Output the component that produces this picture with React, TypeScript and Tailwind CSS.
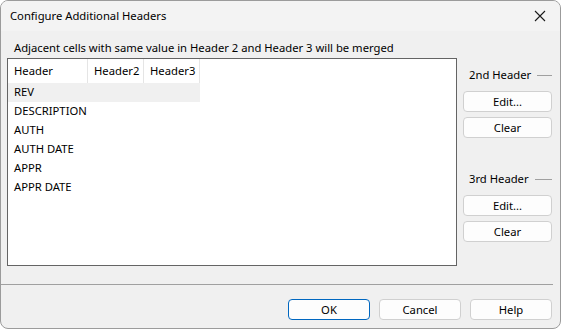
import React from "react";

const font = { fontFamily: '"Noto Sans", "Open Sans", sans-serif' };

function Btn({ label, primary }: { label: string; primary?: boolean }) {
  return (
    <button
      className={
        "h-[21px] rounded-[4px] bg-[#fdfdfd] text-[11.25px] leading-none text-black " +
        (primary ? "border border-[#0067c0]" : "border border-[#d0d0d0]")
      }
    >
      {label}
    </button>
  );
}

function GroupLabel({ text }: { text: string }) {
  return (
    <div className="flex h-[16px] items-center pl-[6px] text-[11.25px] leading-[16px] text-black">
      <span>{text}</span>
      <div className="ml-[6px] h-px flex-1 bg-[#a0a0a0]" />
    </div>
  );
}

const rows = ["REV", "DESCRIPTION", "AUTH", "AUTH DATE", "APPR", "APPR DATE"];

export default function App() {
  return (
    <div
      className="flex h-[329px] w-[561px] flex-col overflow-hidden rounded-[8px] border border-[#9b9b9b] bg-[#f0f0f0]"
      style={font}
    >
      {/* title bar */}
      <div className="flex h-[30px] items-center justify-between bg-[#f3f3f3] pl-[9px] pr-[10px]">
        <span className="text-[11.25px] text-black">Configure Additional Headers</span>
        <svg width="12" height="12" viewBox="0 0 12 12" className="mr-[4px]">
          <path d="M1 1L11 11M11 1L1 11" stroke="#1a1a1a" strokeWidth="1.1" fill="none" />
        </svg>
      </div>

      <div className="flex flex-1 flex-col pl-[6px] pr-[8px]">
        <div className="h-[27px] pl-[7px] pt-[9px] text-[11.25px] leading-[16px] text-black">
          Adjacent cells with same value in Header 2 and Header 3 will be merged
        </div>

        <div className="flex gap-[6px]">
          {/* list */}
          <div className="h-[208px] w-[450px] border border-[#646464] bg-white">
            <div className="flex h-[24px] w-[192px] text-[11.25px] text-black">
              <div className="flex w-[80px] items-center border-r border-[#e5e5e5] pl-[6px]">Header</div>
              <div className="flex w-[56px] items-center border-r border-[#e5e5e5] pl-[6px]">Header2</div>
              <div className="flex w-[56px] items-center border-r border-[#e5e5e5] pl-[6px]">Header3</div>
            </div>
            {rows.map((r, i) => (
              <div
                key={r}
                className={
                  "flex h-[19px] w-[192px] items-center pl-[6px] text-[11.25px] text-black " +
                  (i === 0 ? "bg-[#f0f0f0]" : "")
                }
              >
                {r}
              </div>
            ))}
          </div>

          {/* side buttons */}
          <div className="flex w-[89px] flex-col">
            <div className="mt-[9px]">
              <GroupLabel text="2nd Header" />
            </div>
            <div className="mt-[8px] flex flex-col gap-[5px]">
              <Btn label="Edit..." />
              <Btn label="Clear" />
            </div>
            <div className="mt-[33px]">
              <GroupLabel text="3rd Header" />
            </div>
            <div className="mt-[8px] flex flex-col gap-[5px]">
              <Btn label="Edit..." />
              <Btn label="Clear" />
            </div>
          </div>
        </div>

        <div className="-ml-[6px] mr-[-1px] mt-[18px] h-px bg-[#a0a0a0]" />

        <div className="mt-[14px] flex justify-end gap-[9px]">
          <div className="flex w-[82px] flex-col"><Btn label="OK" primary /></div>
          <div className="flex w-[82px] flex-col"><Btn label="Cancel" /></div>
          <div className="flex w-[82px] flex-col"><Btn label="Help" /></div>
        </div>
      </div>
    </div>
  );
}
